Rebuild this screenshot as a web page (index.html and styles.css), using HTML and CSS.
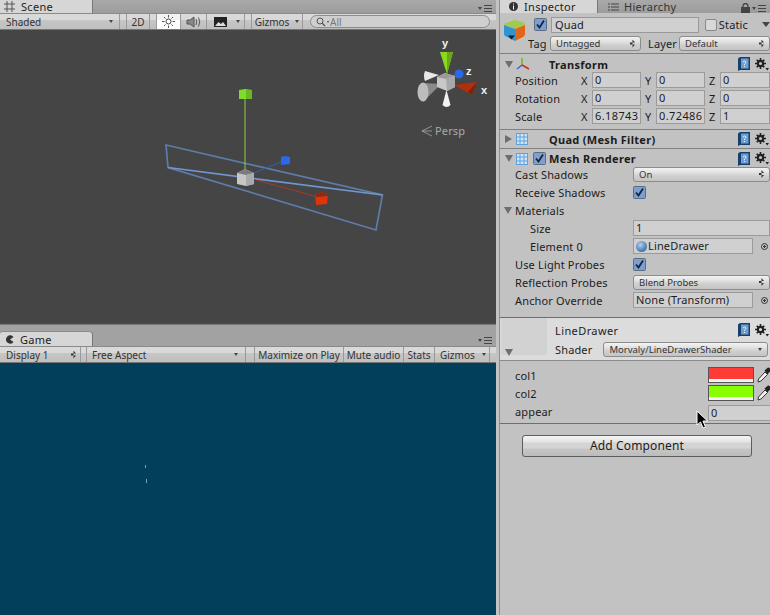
FILE: index.html
```html
<!DOCTYPE html>
<html lang="en">
<head>
  <meta charset="UTF-8" />
  <title>Unity Editor</title>
  <link rel="stylesheet" href="styles.css">
</head>
<body>
  <svg width="0" height="0" class="defs">
    <symbol id="help" viewBox="0 0 12 14">
      <path d="M0 1.500L2 0h10v13H2L0 14z" fill="#17406f"/>
      <rect x="3" y="1.500" width="7.500" height="10" fill="#6f9fd0"/>
      <path d="M5 5q1.700-2 3 0q0 1-1.500 2v1M6.500 9v1" stroke="#e8f0fa" fill="none"/>
    </symbol>
    <symbol id="gear" viewBox="0 0 14 13">
      <circle cx="5.500" cy="5.500" r="2.700" fill="none" stroke="#222" stroke-width="2.200"/>
      <path d="M5.500 0v2.500M5.500 8.500V11M0 5.500h2.500M8.500 5.500H11M1.700 1.700l1.700 1.700M7.600 7.600l1.700 1.700M1.700 9.300l1.700-1.700M7.600 3.400l1.700-1.700" stroke="#222" stroke-width="1.600"/>
      <path d="M10.500 10h3.500l-1.700 2.500z" fill="#222"/>
    </symbol>
    <symbol id="mesh" viewBox="0 0 12 12">
      <rect x="0.500" y="0.500" width="11" height="11" fill="#cfe6fa" stroke="#5ea2dc"/>
      <path d="M4 .5v11M8 .5v11M.5 4h11M.5 8h11" stroke="#5ea2dc"/>
    </symbol>
    <symbol id="check" viewBox="0 0 13 13">
      <rect x="0.500" y="0.500" width="12" height="12" rx="1" fill="#7d9fcf" stroke="#5c6c82"/>
      <path d="M3 6.500l2.500 3L10 2.500" fill="none" stroke="#15243c" stroke-width="1.800"/>
    </symbol>
    <symbol id="dropper" viewBox="0 0 14 16">
      <path d="M1 15l0.500-3L8 5l2.500 2.500L4 14z" fill="#f2f2f2" stroke="#333"/>
      <path d="M7.500 3.500L11 0.500q2.500 0 2.500 3L10.500 7.500z" fill="#222"/>
    </symbol>
  </svg>

  <div class="editor">
    <div class="left">
      <div class="tabbar">
        <div class="tab tab-scene">
          <svg width="11" height="11" viewBox="0 0 11 11"><path d="M3 0v11M8 0v11M0 3h11M0 8h11" stroke="#555"/></svg>
          <span>Scene</span>
        </div>
        <div class="panemenu"><i></i><b></b></div>
      </div>
      <div class="toolbar">
        <div class="tool tool-shaded"><span>Shaded</span><i class="arrow"></i></div>
        <div class="tool tool-2d">2D</div>
        <div class="tool tool-light">
          <svg width="13" height="13" viewBox="0 0 13 13"><circle cx="6.500" cy="6.500" r="2.500" fill="none" stroke="#444"/><path d="M6.500 0v2.500M6.500 10.500V13M0 6.500h2.500M10.500 6.500H13M2 2l1.500 1.500M9.500 9.500L11 11M2 11l1.500-1.500M9.500 3.500L11 2" stroke="#555"/></svg>
        </div>
        <div class="tool tool-audio">
          <svg width="15" height="12" viewBox="0 0 15 12"><path d="M1 4h3l4-3v10L4 8H1z" fill="#888" stroke="#555"/><path d="M10 3q1.500 3 0 6M12.500 1.500q2.500 4.500 0 9" fill="none" stroke="#555"/></svg>
        </div>
        <div class="tool tool-image">
          <svg width="13" height="10" viewBox="0 0 13 10"><rect width="13" height="10" fill="#222"/><path d="M1 9l3.500-4L7 7l2-2 3 4z" fill="#ddd"/></svg>
          <i class="arrow"></i>
        </div>
        <div class="tool tool-gizmos"><span>Gizmos</span><i class="arrow"></i></div>
        <div class="search">
          <svg width="10" height="10" viewBox="0 0 10 10"><circle cx="4" cy="4" r="3" fill="none" stroke="#555"/><path d="M6 6l3 3" stroke="#555" stroke-width="1.300"/></svg>
          <i class="arrow arrow-tiny"></i><span>All</span>
        </div>
      </div>

      <svg class="scene" width="496" height="293" viewBox="0 30 496 293">
        <path d="M166 145L382.500 195L376 230L168 167.500Z" fill="none" stroke="#5f7ca8" stroke-width="1.700"/>
        <path d="M168 167.500L382.500 195" stroke="#7097cf" stroke-width="1.700"/>
        <path d="M245 98V172" stroke="#8fcf3c"/>
        <path d="M245 177L285 160" stroke="#2f62b8"/>
        <path d="M245 177L318 197" stroke="#a83a24"/>
        <path d="M239 90l6-1 7 1v9h-13z" fill="#80dc2a"/>
        <path d="M246 90h6v9h-6z" fill="#68b824"/>
        <path d="M281 157l4-1 5 1v7l-9 1z" fill="#2a68ee"/>
        <path d="M315 194l6-2 7 2-1 10-11 1z" fill="#de3408"/>
        <path d="M315 194l6-2 7 2v2l-12 1z" fill="#8c2a12"/>
        <path d="M237 173l8-4 9 4v11l-8 2-9-2z" fill="#c6c6c6"/>
        <path d="M237 173l8-4 9 4-8 2z" fill="#7c7c7c"/>
        <path d="M246 175l8-2v11l-8 2z" fill="#a9a9a9"/>

        <path d="M440 52l13 0-6 22z" fill="#8cd81e"/>
        <path d="M447 52h6l-6 22z" fill="#6aa81a"/>
        <circle cx="459" cy="74" r="4.500" fill="#2a68e8"/>
        <path d="M425 71l14 4-14 6q-2-5 0-10z" fill="#e8e8e8"/>
        <path d="M423 83l18 1-18 18z" fill="#8a8a8a"/>
        <ellipse cx="423" cy="92" rx="5.500" ry="9.500" fill="#bdbdbd"/>
        <path d="M446.500 90l4 15q-4 4-8 0z" fill="#f2f2f2"/>
        <path d="M454 85l23-3-5 13z" fill="#b0300e"/>
        <path d="M477 82l-5 13-4-3z" fill="#7a2410"/>
        <path d="M437 77l8-4 10 3v11l-8 4-10-4z" fill="#c8c8c8"/>
        <path d="M437 77l8-4 10 3-9 3z" fill="#9a9a9a"/>
        <path d="M446 79l9-3v11l-8 4z" fill="#a8a8a8"/>
        <text x="442" y="47" class="axis">y</text>
        <text x="466" y="75" class="axis">z</text>
        <text x="481" y="94" class="axis">x</text>
        <path d="M432 126l-10 5 10 5M432 131h-10" fill="none" stroke="#aaa" stroke-width="0.800"/>
        <text x="435" y="135" class="persp">Persp</text>
      </svg>

      <div class="split"></div>

      <div class="tabbar tabbar-game">
        <div class="tab tab-game">
          <svg width="9" height="9" viewBox="0 0 9 9"><path d="M8.500 2A4.200 4.200 0 1 0 8.500 7L5 4.500z" fill="#333"/></svg>
          <span>Game</span>
        </div>
        <div class="panemenu"><i></i><b></b></div>
      </div>
      <div class="toolbar toolbar-game">
        <div class="tool tool-display"><span>Display 1</span><i class="updown"></i></div>
        <div class="tool tool-aspect"><span>Free Aspect</span><i class="arrow"></i></div>
        <div class="tool tool-max">Maximize on Play</div>
        <div class="tool tool-mute">Mute audio</div>
        <div class="tool tool-stats">Stats</div>
        <div class="tool tool-gizmos2"><span>Gizmos</span><i class="arrow arrow-split"></i></div>
      </div>
      <div class="game">
        <i class="tick tick-a"></i>
        <i class="tick tick-b"></i>
      </div>
    </div>

    <div class="inspector">
      <div class="tabbar tabbar-insp">
        <div class="tab tab-insp">
          <svg width="9" height="9" viewBox="0 0 9 9"><circle cx="4.500" cy="4.500" r="4.500" fill="#333"/><path d="M4.500 1.500v1M4.500 3.500v4" stroke="#fff"/></svg>
          <span>Inspector</span>
        </div>
        <div class="tab-off">
          <svg width="11" height="8" viewBox="0 0 11 8"><path d="M0 1h2M3 1h8M0 4h2M3 4h8M0 7h2M3 7h8" stroke="#444"/></svg>
          <span>Hierarchy</span>
        </div>
        <div class="panemenu">
          <svg width="9" height="10" viewBox="0 0 9 10"><path d="M2 4V3a2.500 2.500 0 0 1 5 0v1" fill="none" stroke="#444" stroke-width="1.300"/><rect y="4" width="9" height="6" fill="#444"/></svg>
          <i></i><b></b>
        </div>
      </div>

      <div class="objhead">
        <svg class="cube" width="23" height="22" viewBox="0 0 23 22">
          <path d="M1 5Q1 3 3 3L12 0l8 2q2 1 2 3l-10 4z" fill="#a3c94e"/>
          <path d="M1 5l11 4v12L2 16q-1-1-1-2z" fill="#2f93d2"/>
          <path d="M12 9l10-4v9q0 2-2 3l-8 4z" fill="#e2661a"/>
          <path d="M5 15.500h7l-3.500 4z" fill="#1c1c1c"/>
        </svg>
        <div class="objrows">
          <div class="objrow">
            <svg class="chk"><use href="#check"/></svg>
            <div class="namefield">Quad</div>
            <i class="box"></i><span class="static">Static</span><i class="arrow arrow-big"></i>
          </div>
          <div class="objrow objrow-tag">
            <span class="taglabel">Tag</span>
            <div class="popup popup-tag"><span>Untagged</span><i class="updown"></i></div>
            <span class="layerlabel">Layer</span>
            <div class="popup popup-layer"><span>Default</span><i class="updown"></i></div>
          </div>
        </div>
      </div>

      <div class="comphead comphead-transform">
        <i class="tri-down"></i>
        <svg class="compicon" width="14" height="14" viewBox="0 0 14 14"><path d="M6 8V1" stroke="#6ab820" stroke-width="1.500"/><path d="M6 8L1 12" stroke="#2a68d8" stroke-width="1.500"/><path d="M6 8l7 4" stroke="#c8301c" stroke-width="1.500"/></svg>
        <span class="comptitle">Transform</span>
        <svg class="help"><use href="#help"/></svg>
        <svg class="gear"><use href="#gear"/></svg>
      </div>
      <div class="vecrow"><span class="label">Position</span><span class="axisname">X</span><div class="field">0</div><span class="axisname">Y</span><div class="field">0</div><span class="axisname">Z</span><div class="field">0</div></div>
      <div class="vecrow"><span class="label">Rotation</span><span class="axisname">X</span><div class="field">0</div><span class="axisname">Y</span><div class="field">0</div><span class="axisname">Z</span><div class="field">0</div></div>
      <div class="vecrow"><span class="label">Scale</span><span class="axisname">X</span><div class="field">6.18743</div><span class="axisname">Y</span><div class="field">0.72486</div><span class="axisname">Z</span><div class="field">1</div></div>

      <div class="comphead comphead-filter">
        <i class="tri-right"></i>
        <svg class="compicon" width="12" height="12"><use href="#mesh"/></svg>
        <span class="comptitle">Quad (Mesh Filter)</span>
        <svg class="help"><use href="#help"/></svg>
        <svg class="gear"><use href="#gear"/></svg>
      </div>
      <div class="comphead comphead-renderer">
        <i class="tri-down"></i>
        <svg class="compicon" width="12" height="12"><use href="#mesh"/></svg>
        <svg class="chk chk-head"><use href="#check"/></svg>
        <span class="comptitle">Mesh Renderer</span>
        <svg class="help"><use href="#help"/></svg>
        <svg class="gear"><use href="#gear"/></svg>
      </div>

      <div class="proprow"><span class="label">Cast Shadows</span><div class="popup popup-wide"><span>On</span><i class="updown"></i></div></div>
      <div class="proprow"><span class="label">Receive Shadows</span><svg class="chk"><use href="#check"/></svg></div>
      <div class="proprow proprow-fold"><i class="tri-down"></i><span class="label">Materials</span></div>
      <div class="proprow proprow-sub"><span class="label">Size</span><div class="field field-wide">1</div></div>
      <div class="proprow proprow-sub"><span class="label">Element 0</span><div class="field field-obj"><i class="ball"></i>LineDrawer</div><i class="picker"></i></div>
      <div class="proprow"><span class="label">Use Light Probes</span><svg class="chk"><use href="#check"/></svg></div>
      <div class="proprow"><span class="label">Reflection Probes</span><div class="popup popup-wide"><span>Blend Probes</span><i class="updown"></i></div></div>
      <div class="proprow"><span class="label">Anchor Override</span><div class="field field-obj">None (Transform)</div><i class="picker"></i></div>

      <div class="mathead">
        <div class="matpreview"><i class="tri-down"></i></div>
        <div class="matcol">
          <div class="matname"><span>LineDrawer</span>
            <svg class="help"><use href="#help"/></svg>
            <svg class="gear"><use href="#gear"/></svg>
          </div>
          <div class="matshader"><span>Shader</span><div class="popup popup-shader"><span>Morvaly/LineDrawerShader</span><i class="arrow"></i></div></div>
        </div>
      </div>

      <div class="matprops">
        <div class="colrow"><span class="label">col1</span><div class="swatch swatch-red"></div><svg class="dropper"><use href="#dropper"/></svg></div>
        <div class="colrow"><span class="label">col2</span><div class="swatch swatch-green"></div><svg class="dropper"><use href="#dropper"/></svg></div>
        <div class="colrow"><span class="label">appear</span><div class="field field-appear">0</div></div>
      </div>

      <div class="addwrap"><div class="addbtn">Add Component</div></div>
    </div>
  </div>

  <svg class="cursor" width="12" height="19" viewBox="0 0 12 19"><path d="M1 1v14l3.500-3 2.500 6 2.500-1-2.500-6h4.500z" fill="#000" stroke="#fff"/></svg>
</body>
</html>
```
FILE: styles.css
```css
html, body {
  margin: 0;
  width: 770px;
  height: 615px;
  overflow: hidden;
}

body {
  font-family: "Noto Sans", sans-serif;
  font-size: 11px;
  letter-spacing: 0.15px;
  color: #1c1c1c;
  background: #c2c2c2;
  position: relative;
}

.defs { position: absolute; }

.editor {
  display: flex;
  height: 615px;
}

.left {
  width: 496px;
  flex: none;
  display: flex;
  flex-direction: column;
  background: #a2a2a2;
}

/* tabs */
.tabbar {
  height: 13px;
  display: flex;
  justify-content: space-between;
  background: linear-gradient(#a9a9a9, #9c9c9c);
  flex: none;
}

.tabbar-game {
  height: 15px;
  padding-top: 1px;
  background: #a2a2a2;
}

.tab {
  width: 93px;
  display: flex;
  align-items: center;
  gap: 6px;
  padding-left: 4px;
  box-sizing: border-box;
  background: #d6d6d6;
  border-right: 1px solid #777;
  font-size: 11px;
  letter-spacing: 0.3px;
  line-height: 13px;
  color: #222;
}

.tab-game {
  border-top: 1px solid #8a8a8a;
  border-top-right-radius: 4px;
  border-top-left-radius: 3px;
  padding-left: 5px;
}

.panemenu {
  display: flex;
  align-items: center;
  gap: 2px;
  padding-right: 4px;
  padding-top: 3px;
}

.panemenu i {
  width: 0;
  height: 0;
  border-left: 2px solid transparent;
  border-right: 2px solid transparent;
  border-top: 3px solid #444;
}

.panemenu b {
  width: 8px;
  height: 5px;
  border-top: 1px solid #444;
  border-bottom: 1px solid #444;
  background: linear-gradient(transparent 2px, #444 2px, #444 3px, transparent 3px);
}

/* toolbars */
.toolbar {
  height: 17px;
  flex: none;
  display: flex;
  align-items: stretch;
  box-sizing: border-box;
  background: linear-gradient(#d9d9d9 0, #d9d9d9 6px, #c6c6c6 6px, #bfbfbf 100%);
  border-top: 1px solid #8a8a8a;
  border-bottom: 1px solid #777;
  font-size: 10px;
  letter-spacing: 0;
  color: #333;
}

.tool {
  display: flex;
  align-items: center;
  justify-content: center;
  box-sizing: border-box;
  border-right: 1px solid #9a9a9a;
  flex: none;
  white-space: nowrap;
}

.arrow {
  width: 0;
  height: 0;
  border-left: 2.500px solid transparent;
  border-right: 2.500px solid transparent;
  border-top: 3px solid #444;
  display: inline-block;
  flex: none;
}

.arrow-big {
  border-left-width: 4px;
  border-right-width: 4px;
  border-top-width: 5px;
  margin-left: 14px;
}

.updown {
  width: 5px;
  height: 8px;
  flex: none;
  background: #333;
  clip-path: polygon(50% 0, 100% 38%, 0 38%, 0 62%, 100% 62%, 50% 100%);
}

.tool-shaded { width: 120px; justify-content: space-between; padding: 0 6px; margin-right: 6px; }
.tool-2d { width: 24px; border-left: 1px solid #9a9a9a; margin-right: 6px; }
.tool-light { width: 25px; background: linear-gradient(#f2f2f2 0, #f2f2f2 6px, #fff 6px); border-left: 1px solid #9a9a9a; }
.tool-audio { width: 26px; }
.tool-image { width: 38px; gap: 9px; margin-right: 6px; justify-content: flex-start; padding-left: 7px; }
.tool-gizmos { width: 52px; gap: 6px; border-left: 1px solid #9a9a9a; margin-right: 7px; }

.search {
  width: 180px;
  height: 13px;
  margin-top: 1px;
  box-sizing: border-box;
  border: 1px solid #8c8c8c;
  border-radius: 7px;
  background: #cfcfcf;
  display: flex;
  align-items: center;
  padding-left: 5px;
  color: #777;
  gap: 1px;
}

.arrow-tiny {
  border-left-width: 1.500px;
  border-right-width: 1.500px;
  border-top-width: 2px;
}

.scene {
  display: block;
  background: #454545;
  flex: none;
}

.axis {
  font-family: "Liberation Sans", sans-serif;
  font-size: 11px;
  font-weight: bold;
  fill: #f2f2f2;
}

.persp {
  font-size: 11px;
  fill: #aaa;
}

.split {
  height: 7px;
  flex: none;
  background: linear-gradient(#4a4a4a 0, #4a4a4a 1px, #a2a2a2 2px);
}

.tool-display { width: 81px; justify-content: space-between; padding: 0 4px 0 6px; margin-right: 5px; }
.tool-aspect { width: 160px; justify-content: space-between; padding: 0 7px 0 5px; border-left: 1px solid #9a9a9a; margin-right: 8px; }
.tool-max { width: 90px; border-left: 1px solid #9a9a9a; }
.tool-mute { width: 60px; }
.tool-stats { width: 31px; }
.tool-gizmos2 { width: 55px; justify-content: space-between; padding: 0 3px 0 5px; }

.arrow-split {
  box-shadow: -3px -4px 0 -3px #999;
}

.game {
  flex: 1;
  background: #023f5a;
  position: relative;
}

.tick {
  position: absolute;
  width: 1px;
  background: #6fa6c0;
}

.tick-a { left: 145px; top: 102px; height: 3px; }
.tick-b { left: 146px; top: 116px; height: 4px; }

/* inspector */
.inspector {
  flex: 1;
  min-width: 0;
  margin-left: 3px;
  border-left: 1px solid #8e8e8e;
  background: #c2c2c2;
  overflow: hidden;
}

.tabbar-insp .tab {
  width: 98px;
  padding-left: 9px;
}

.tab-off {
  display: flex;
  align-items: center;
  gap: 5px;
  padding-left: 10px;
  flex: 1;
  font-size: 11px;
  letter-spacing: 0.3px;
  line-height: 13px;
  color: #333;
}

.objhead {
  height: 41px;
  display: flex;
  position: relative;
  padding-top: 3px;
  box-sizing: border-box;
  border-bottom: 1px solid #808080;
}

.cube {
  margin: 4px 4px 0 3px;
  flex: none;
}

.objrows {
  flex: 1;
  min-width: 0;
}

.objrow {
  display: flex;
  align-items: center;
  height: 17px;
  padding-left: 4px;
}

.chk {
  width: 13px;
  height: 13px;
  flex: none;
}

.namefield {
  width: 151px;
  height: 16px;
  margin-left: 4px;
  box-sizing: border-box;
  border: 1px solid #999;
  background: #d0d0d0;
  line-height: 14px;
  padding-left: 3px;
}

.box {
  width: 12px;
  height: 12px;
  margin-left: 6px;
  box-sizing: border-box;
  border: 1px solid #888;
  border-radius: 2px;
  background: #d8d8d8;
  flex: none;
}

.static {
  margin-left: 2px;
}

.objrow-tag {
  margin-top: 2px;
  padding-left: 0;
}

.taglabel {
  width: 22px;
  margin-left: -2px;
}

.layerlabel {
  margin-left: 7px;
  width: 31px;
}

.popup {
  height: 15px;
  box-sizing: border-box;
  border: 1px solid #8c8c8c;
  border-radius: 3px;
  background: linear-gradient(#f2f2f2 0, #e4e4e4 4px, #cfcfcf 8px, #c4c4c4 100%);
  display: flex;
  align-items: center;
  justify-content: space-between;
  padding: 0 5px 0 5px;
  font-size: 9.500px;
  letter-spacing: 0;
  color: #333;
  flex: none;
}

.popup-tag { width: 91px; }
.popup-layer { width: 91px; }
.popup-wide { width: 137px; }
.popup-shader { width: 165px; }

.comphead {
  display: flex;
  align-items: center;
  position: relative;
  padding-left: 5px;
  box-sizing: border-box;
}

.comphead-transform {
  height: 17px;
  padding-top: 3px;
}

.comphead-filter {
  margin-top: 4px;
  border-top: 1px solid #808080;
  border-bottom: 1px solid #808080;
  height: 20px;
}

.comphead-renderer {
  height: 16px;
  padding-top: 3px;
}

.comptitle {
  font-weight: 700;
  letter-spacing: 0.3px;
  position: absolute;
  left: 49px;
}

.tri-down {
  width: 0;
  height: 0;
  border-left: 4px solid transparent;
  border-right: 4px solid transparent;
  border-top: 7px solid #6e6e6e;
  flex: none;
}

.tri-right {
  width: 0;
  height: 0;
  border-top: 4px solid transparent;
  border-bottom: 4px solid transparent;
  border-left: 7px solid #6e6e6e;
  margin-right: 1px;
  flex: none;
}

.compicon {
  margin-left: 3px;
  flex: none;
}

.chk-head {
  margin-left: 5px;
}

.help {
  width: 12px;
  height: 14px;
  position: absolute;
  right: 20px;
}

.gear {
  width: 14px;
  height: 13px;
  position: absolute;
  right: 1px;
}

.vecrow, .proprow, .colrow {
  height: 18px;
  display: flex;
  align-items: center;
  padding-left: 15px;
  box-sizing: border-box;
}

.label {
  flex: none;
}

.vecrow .label { width: 66px; }

.axisname {
  width: 11px;
  flex: none;
}

.axisname ~ .axisname {
  margin-left: 4px;
}

.field {
  height: 16px;
  box-sizing: border-box;
  border: 1px solid #9b9b9b;
  background: #d0d0d0;
  line-height: 14px;
  padding-left: 2px;
  width: 49px;
  flex: none;
  overflow: hidden;
  white-space: nowrap;
}

.vecrow .field { letter-spacing: 0.4px; }

.vecrow .field:last-child { width: 50px; }

.proprow .label { width: 118px; }

.proprow-fold { padding-left: 4px; }
.proprow-fold .tri-down { margin-right: 3px; }

.proprow-sub .label { margin-left: 15px; width: 103px; }

.field-wide { width: 137px; }

.field-obj {
  width: 120px;
  display: flex;
  align-items: center;
}

.ball {
  width: 11px;
  height: 11px;
  border-radius: 50%;
  background: radial-gradient(circle at 40% 35%, #b5d0ee, #3a6ea8 75%);
  margin-right: 1px;
  flex: none;
}

.picker {
  width: 7px;
  height: 7px;
  margin-left: 8px;
  box-sizing: border-box;
  border: 1px solid #333;
  border-radius: 50%;
  background: radial-gradient(#333 1px, transparent 1.200px);
  flex: none;
}

.mathead {
  height: 44px;
  margin-top: 8px;
  border-top: 1px solid #6e6e6e;
  border-bottom: 1px solid #8a8a8a;
  background: #dcdcdc;
  display: flex;
  box-sizing: border-box;
  position: relative;
}

.matpreview {
  width: 46px;
  height: 37px;
  margin-left: 1px;
  flex: none;
  background: #d2d2d2;
  display: flex;
  align-items: flex-end;
}

.matpreview .tri-down {
  margin: 0 0 -1px 4px;
}

.matcol {
  margin-left: 8px;
  flex: 1;
  min-width: 0;
}

.matname {
  height: 24px;
  display: flex;
  align-items: center;
  position: relative;
  letter-spacing: 0.4px;
}

.matshader {
  display: flex;
  align-items: center;
  gap: 11px;
}

.matprops {
  padding-top: 5px;
  padding-bottom: 3px;
  border-bottom: 1px solid #6e6e6e;
}

.colrow .label { width: 193px; }

.swatch {
  width: 46px;
  height: 16px;
  box-sizing: border-box;
  border: 1px solid #555;
  flex: none;
}

.swatch-red { background: linear-gradient(#ff3b36 0, #ff3b36 11px, #f6f6f6 11px); }
.swatch-green { background: linear-gradient(#88ff00 0, #88ff00 11px, #f6f6f6 11px); }

.dropper {
  width: 14px;
  height: 16px;
  margin-left: 3px;
  flex: none;
}

.field-appear {
  width: 70px;
  margin-top: 3px;
}

.addwrap {
  padding: 11px 0 0 22px;
}

.addbtn {
  width: 230px;
  height: 22px;
  box-sizing: border-box;
  border: 1px solid #5c5c5c;
  border-radius: 3px;
  background: linear-gradient(#f4f4f4 0, #e4e4e4 6px, #d4d4d4 7px, #d4d4d4 12px, #c6c6c6 13px, #bcbcbc 100%);
  text-align: center;
  line-height: 20px;
  font-size: 12px;
}

.cursor {
  position: absolute;
  left: 696px;
  top: 410px;
}
```
